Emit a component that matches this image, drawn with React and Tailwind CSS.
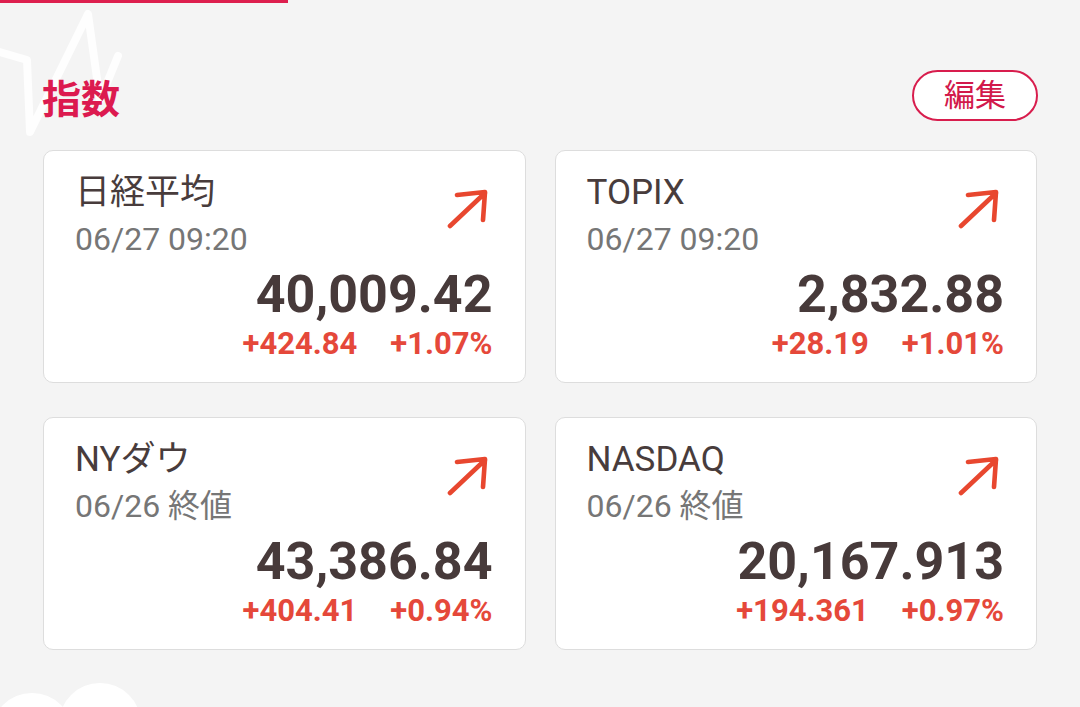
import React from "react";

function UpArrow() {
  return (
    <svg width="44" height="42" viewBox="0 0 44 42" className="mt-[12px] mr-[3px] shrink-0">
      <path d="M4 39 L39 6 M11 8 L39 5 L37 33" fill="none" stroke="#e8472f" strokeWidth="4.6" strokeLinecap="round" strokeLinejoin="round" />
    </svg>
  );
}

function Card({ title, date, value, change, pct }) {
  return (
    <div className="h-[233px] rounded-[10px] border border-[#dddddd] bg-white pl-[31px] pr-[32px] pt-[24px]">
      <div className="flex justify-between">
        <div>
          <div className="text-[35px] leading-[35px] text-[#483c3c]">{title}</div>
          <div className="mt-[13px] text-[32px] leading-[32px] text-[#767676]">{date}</div>
        </div>
        <UpArrow />
      </div>
      <div className="mt-[13px] text-right text-[52px] font-bold leading-[53px] text-[#473a3a]">{value}</div>
      <div className="mt-[7px] flex justify-end gap-[33px] text-[31px] font-bold leading-[32px] text-[#e5483a]">
        <span>{change}</span>
        <span>{pct}</span>
      </div>
    </div>
  );
}

export default function App() {
  const cards = [
    { title: "日経平均", date: "06/27 09:20", value: "40,009.42", change: "+424.84", pct: "+1.07%" },
    { title: "TOPIX", date: "06/27 09:20", value: "2,832.88", change: "+28.19", pct: "+1.01%" },
    { title: "NYダウ", date: "06/26 終値", value: "43,386.84", change: "+404.41", pct: "+0.94%" },
    { title: "NASDAQ", date: "06/26 終値", value: "20,167.913", change: "+194.361", pct: "+0.97%" },
  ];
  return (
    <div
      className="relative h-[707px] w-[1080px] overflow-hidden bg-[#f4f4f4]"
      style={{ fontFamily: 'Roboto, "Noto Sans CJK JP", sans-serif' }}
    >
      <svg className="absolute left-0 top-0" width="140" height="150" viewBox="0 0 140 150">
        <polyline
          points="-4,51 27,60 30,132 88,14 100,100 118,56"
          fill="none"
          stroke="#ffffff"
          strokeOpacity="0.85"
          strokeWidth="8"
          strokeLinejoin="round"
          strokeLinecap="round"
        />
      </svg>
      <svg className="absolute left-0 top-[680px]" width="160" height="27" viewBox="0 680 160 27">
        <circle cx="32" cy="734" r="41" fill="#ffffff" />
        <circle cx="100" cy="724" r="41" fill="#ffffff" />
      </svg>
      <div className="relative">
        <div className="h-[3px] w-[288px] bg-[#dd1f4e]" />
        <div className="mt-[67px] flex h-[51px] items-end justify-between px-[42px]">
          <span className="mb-[1px] text-[39px] font-bold leading-[40px] text-[#dc1a4f]">指数</span>
          <button className="flex h-[51px] w-[126px] items-center justify-center rounded-full border-2 border-[#d81d4d] bg-white text-[31px] leading-none text-[#d2194b]">
            編集
          </button>
        </div>
        <div className="mt-[29px] grid grid-cols-2 gap-x-[29px] gap-y-[34px] px-[43px]">
          {cards.map((c) => (
            <Card key={c.title} {...c} />
          ))}
        </div>
      </div>
    </div>
  );
}
